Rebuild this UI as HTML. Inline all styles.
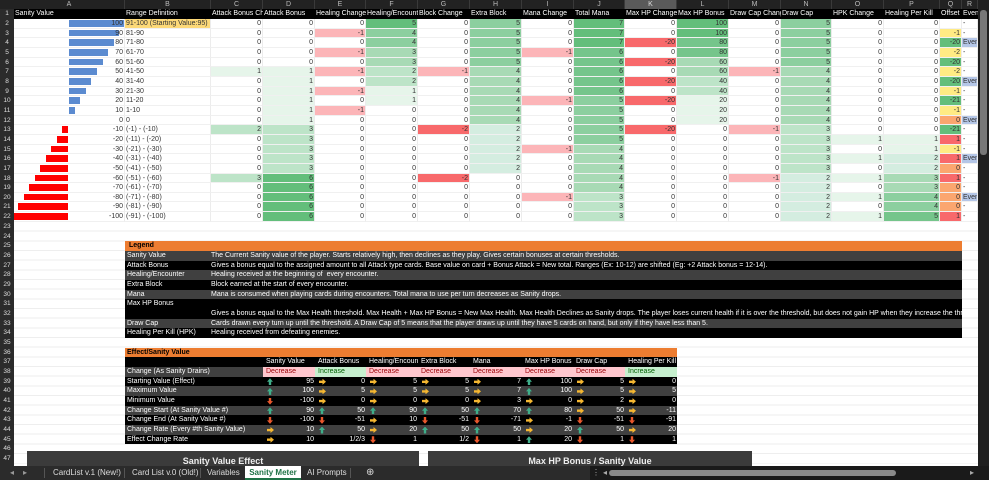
<!DOCTYPE html>
<html><head><meta charset="utf-8"><style>
*{margin:0;padding:0;box-sizing:border-box}
body{width:989px;height:480px;overflow:hidden;background:#fff;font-family:"Liberation Sans",Arial,sans-serif;font-size:7px;position:relative;color:#333}
.g{position:absolute;left:0;top:0;display:grid;grid-template-columns:14px 111px 86px 52px 52px 51px 52px 52px 52px 52px 51px 52px 52px 52px 51px 52px 56px 22px 16px;grid-template-rows:9px 10px repeat(21,9.67px)}
.g>x{display:block;text-align:right;padding:0 1px;line-height:9.67px;white-space:nowrap;overflow:hidden;border-right:1px solid #ececec;border-bottom:1px solid #f0f0f0;position:relative}
.g>x.n{background:#2b2b2b;color:#ddd;text-align:center;border:none;font-size:6.5px}
.g>x.ch{background:#222;color:#bbb;text-align:center;line-height:9px;border:none;border-right:1px solid #3a3a3a}
.g>x.k{background:#5a5a5a;color:#ddd}
.g>x.h{background:#000;color:#fff;text-align:left;line-height:10px;border:none}
.g>x.t{text-align:left}
.a{background:#63be7b}.b{background:#75c58b}.c{background:#8ccf9f}.d{background:#a8dab5}.e{background:#bde4c8}.f{background:#d4ede0}.hh{background:#e6f5ea}
.p{background:#fcb5b8}.r{background:#f8696b}.y{background:#ffeb84}.o{background:#fba66f}.u{background:#b4c6e7;text-align:left!important}.yy{background:#fdd978}
.bp{position:absolute;left:55px;top:1px;bottom:1px;background:#5b8bd0}
.bn{position:absolute;right:56px;top:1px;bottom:1px;background:#ff0000}
.g>x span.v{position:relative}
.lower{position:absolute;left:14px;top:222px;width:964px;height:244px;background-image:repeating-linear-gradient(to bottom,transparent 0,transparent 8.67px,#eee 8.67px,#eee 9.67px)}
.leg{position:absolute;left:125px;top:241.4px;width:837px;color:#fff}
.leg div{height:9.67px;line-height:9.67px;display:flex;white-space:nowrap;overflow:hidden}
.leg div span:first-child{width:86px;flex:0 0 86px;padding-left:2px}
.or{background:#ed7d31!important;color:#000;font-weight:bold;padding-left:2px}
.gr{background:#404040}.bk{background:#000}
.eff{position:absolute;left:125px;top:347.8px;width:552px;color:#fff}
.eff .rw{height:9.67px;line-height:9.67px;display:grid;grid-template-columns:138px 52px 51px 52px 52px 52px 51px 52px 52px;white-space:nowrap}
.eff .rw>span{position:relative;text-align:right;padding-right:1px;overflow:hidden}
.eff .rw>span:first-child{text-align:left;padding-left:2px}
.eff .hd>span{text-align:left!important;padding-left:3px}
.dec{background:#ffc7ce;color:#9c0006;text-align:left!important;padding-left:3px}
.inc{background:#c6efce;color:#006100;text-align:left!important;padding-left:3px}
i{position:absolute;left:4px;top:1.5px;width:6px;height:7px;display:block}
i.u1{background:#3fae8a;clip-path:polygon(50% 0,100% 50%,70% 50%,70% 100%,30% 100%,30% 50%,0 50%)}
i.d1{background:#e9572c;clip-path:polygon(50% 100%,100% 50%,70% 50%,70% 0,30% 0,30% 50%,0 50%)}
i.r1{background:#f5b731;width:7px;height:6px;top:2px;clip-path:polygon(100% 50%,50% 0,50% 30%,0 30%,0 70%,50% 70%,50% 100%)}
.chart{position:absolute;top:451px;height:15px;background:#3b3b3b;color:#eee;font-weight:bold;font-size:9px;text-align:center;line-height:21px;overflow:hidden}
.tabs{position:absolute;left:0;top:466px;width:989px;height:14px;background:#2b2b2b;color:#ddd;font-size:8px}
.tabs span{position:absolute;top:0;line-height:14px;white-space:nowrap}
.vs{position:absolute;left:978px;top:0;width:11px;height:466px;background:#1f1f1f}
</style></head><body>
<div class="lower"></div>
<div class="g">
<x class="n" style="background:#222"></x><x class="ch">A</x><x class="ch">B</x><x class="ch">C</x><x class="ch">D</x><x class="ch">E</x><x class="ch">F</x><x class="ch">G</x><x class="ch">H</x><x class="ch">I</x><x class="ch">J</x><x class="ch k">K</x><x class="ch">L</x><x class="ch">M</x><x class="ch">N</x><x class="ch">O</x><x class="ch">P</x><x class="ch">Q</x><x class="ch">R</x>
<x class="n">1</x><x class="h">Sanity Value</x><x class="h">Range Definition</x><x class="h">Attack Bonus Ch</x><x class="h">Attack Bonus</x><x class="h">Healing Change</x><x class="h">Healing/Encount</x><x class="h">Block Change</x><x class="h">Extra Block</x><x class="h">Mana Change</x><x class="h">Total Mana</x><x class="h">Max HP Change</x><x class="h">Max HP Bonus</x><x class="h">Draw Cap Chang</x><x class="h">Draw Cap</x><x class="h">HPK Change</x><x class="h">Healing Per Kill</x><x class="h">Offset</x><x class="h">Even</x>
<x class="n">2</x><x><b class="bp" style="width:56px"></b><span class="v">100</span></x><x class="t yy">91-100 (Starting Value:95)</x><x>0</x><x>0</x><x>0</x><x class="a">5</x><x>0</x><x class="c">5</x><x>0</x><x class="a">7</x><x>0</x><x class="a">100</x><x>0</x><x class="c">5</x><x>0</x><x>0</x><x></x><x class="t">-</x>
<x class="n">3</x><x><b class="bp" style="width:50px"></b><span class="v">90</span></x><x class="t">81-90</x><x>0</x><x>0</x><x class="p">-1</x><x class="c">4</x><x>0</x><x class="c">5</x><x>0</x><x class="a">7</x><x>0</x><x class="a">100</x><x>0</x><x class="c">5</x><x>0</x><x>0</x><x class="y">-1</x><x class="t">-</x>
<x class="n">4</x><x><b class="bp" style="width:45px"></b><span class="v">80</span></x><x class="t">71-80</x><x>0</x><x>0</x><x>0</x><x class="c">4</x><x>0</x><x class="c">5</x><x>0</x><x class="a">7</x><x class="r">-20</x><x class="b">80</x><x>0</x><x class="c">5</x><x>0</x><x>0</x><x class="a">-20</x><x class="u">Even</x>
<x class="n">5</x><x><b class="bp" style="width:39px"></b><span class="v">70</span></x><x class="t">61-70</x><x>0</x><x>0</x><x class="p">-1</x><x class="d">3</x><x>0</x><x class="c">5</x><x class="p">-1</x><x class="b">6</x><x>0</x><x class="b">80</x><x>0</x><x class="c">5</x><x>0</x><x>0</x><x class="y">-2</x><x class="t">-</x>
<x class="n">6</x><x><b class="bp" style="width:34px"></b><span class="v">60</span></x><x class="t">51-60</x><x>0</x><x>0</x><x>0</x><x class="d">3</x><x>0</x><x class="c">5</x><x>0</x><x class="b">6</x><x class="r">-20</x><x class="d">60</x><x>0</x><x class="c">5</x><x>0</x><x>0</x><x class="a">-20</x><x class="t">-</x>
<x class="n">7</x><x><b class="bp" style="width:28px"></b><span class="v">50</span></x><x class="t">41-50</x><x class="hh">1</x><x class="hh">1</x><x class="p">-1</x><x class="e">2</x><x class="p">-1</x><x class="d">4</x><x>0</x><x class="b">6</x><x>0</x><x class="d">60</x><x class="p">-1</x><x class="d">4</x><x>0</x><x>0</x><x class="y">-2</x><x class="t">-</x>
<x class="n">8</x><x><b class="bp" style="width:22px"></b><span class="v">40</span></x><x class="t">31-40</x><x>0</x><x class="hh">1</x><x>0</x><x class="e">2</x><x>0</x><x class="d">4</x><x>0</x><x class="b">6</x><x class="r">-20</x><x class="e">40</x><x>0</x><x class="d">4</x><x>0</x><x>0</x><x class="a">-20</x><x class="u">Even</x>
<x class="n">9</x><x><b class="bp" style="width:17px"></b><span class="v">30</span></x><x class="t">21-30</x><x>0</x><x class="hh">1</x><x class="p">-1</x><x class="hh">1</x><x>0</x><x class="d">4</x><x>0</x><x class="b">6</x><x>0</x><x class="e">40</x><x>0</x><x class="d">4</x><x>0</x><x>0</x><x class="y">-1</x><x class="t">-</x>
<x class="n">10</x><x><b class="bp" style="width:11px"></b><span class="v">20</span></x><x class="t">11-20</x><x>0</x><x class="hh">1</x><x>0</x><x class="hh">1</x><x>0</x><x class="d">4</x><x class="p">-1</x><x class="c">5</x><x class="r">-20</x><x class="hh">20</x><x>0</x><x class="d">4</x><x>0</x><x>0</x><x class="a">-21</x><x class="t">-</x>
<x class="n">11</x><x><b class="bp" style="width:6px"></b><span class="v">10</span></x><x class="t">1-10</x><x>0</x><x class="hh">1</x><x class="p">-1</x><x>0</x><x>0</x><x class="d">4</x><x>0</x><x class="c">5</x><x>0</x><x class="hh">20</x><x>0</x><x class="d">4</x><x>0</x><x>0</x><x class="y">-1</x><x class="t">-</x>
<x class="n">12</x><x>0</x><x class="t">0</x><x>0</x><x class="hh">1</x><x>0</x><x>0</x><x>0</x><x class="d">4</x><x>0</x><x class="c">5</x><x>0</x><x class="hh">20</x><x>0</x><x class="d">4</x><x>0</x><x>0</x><x class="o">0</x><x class="u">Even</x>
<x class="n">13</x><x><b class="bn" style="width:6px"></b><span class="v">-10</span></x><x class="t">(-1) - (-10)</x><x class="e">2</x><x class="e">3</x><x>0</x><x>0</x><x class="r">-2</x><x class="f">2</x><x>0</x><x class="c">5</x><x class="r">-20</x><x>0</x><x class="p">-1</x><x class="e">3</x><x>0</x><x>0</x><x class="a">-21</x><x class="t">-</x>
<x class="n">14</x><x><b class="bn" style="width:11px"></b><span class="v">-20</span></x><x class="t">(-11) - (-20)</x><x>0</x><x class="e">3</x><x>0</x><x>0</x><x>0</x><x class="f">2</x><x>0</x><x class="c">5</x><x>0</x><x>0</x><x>0</x><x class="e">3</x><x class="hh">1</x><x class="hh">1</x><x class="r">1</x><x class="t">-</x>
<x class="n">15</x><x><b class="bn" style="width:17px"></b><span class="v">-30</span></x><x class="t">(-21) - (-30)</x><x>0</x><x class="e">3</x><x>0</x><x>0</x><x>0</x><x class="f">2</x><x class="p">-1</x><x class="d">4</x><x>0</x><x>0</x><x>0</x><x class="e">3</x><x>0</x><x class="hh">1</x><x class="y">-1</x><x class="t">-</x>
<x class="n">16</x><x><b class="bn" style="width:22px"></b><span class="v">-40</span></x><x class="t">(-31) - (-40)</x><x>0</x><x class="e">3</x><x>0</x><x>0</x><x>0</x><x class="f">2</x><x>0</x><x class="d">4</x><x>0</x><x>0</x><x>0</x><x class="e">3</x><x class="hh">1</x><x class="f">2</x><x class="r">1</x><x class="u">Even</x>
<x class="n">17</x><x><b class="bn" style="width:28px"></b><span class="v">-50</span></x><x class="t">(-41) - (-50)</x><x>0</x><x class="e">3</x><x>0</x><x>0</x><x>0</x><x class="f">2</x><x>0</x><x class="d">4</x><x>0</x><x>0</x><x>0</x><x class="e">3</x><x>0</x><x class="f">2</x><x class="o">0</x><x class="t">-</x>
<x class="n">18</x><x><b class="bn" style="width:33px"></b><span class="v">-60</span></x><x class="t">(-51) - (-60)</x><x class="e">3</x><x class="a">6</x><x>0</x><x>0</x><x class="r">-2</x><x>0</x><x>0</x><x class="d">4</x><x>0</x><x>0</x><x class="p">-1</x><x class="f">2</x><x class="hh">1</x><x class="d">3</x><x class="r">1</x><x class="t">-</x>
<x class="n">19</x><x><b class="bn" style="width:39px"></b><span class="v">-70</span></x><x class="t">(-61) - (-70)</x><x>0</x><x class="a">6</x><x>0</x><x>0</x><x>0</x><x>0</x><x>0</x><x class="d">4</x><x>0</x><x>0</x><x>0</x><x class="f">2</x><x>0</x><x class="d">3</x><x class="o">0</x><x class="t">-</x>
<x class="n">20</x><x><b class="bn" style="width:44px"></b><span class="v">-80</span></x><x class="t">(-71) - (-80)</x><x>0</x><x class="a">6</x><x>0</x><x>0</x><x>0</x><x>0</x><x class="p">-1</x><x class="e">3</x><x>0</x><x>0</x><x>0</x><x class="f">2</x><x class="hh">1</x><x class="c">4</x><x class="o">0</x><x class="u">Even</x>
<x class="n">21</x><x><b class="bn" style="width:50px"></b><span class="v">-90</span></x><x class="t">(-81) - (-90)</x><x>0</x><x class="a">6</x><x>0</x><x>0</x><x>0</x><x>0</x><x>0</x><x class="e">3</x><x>0</x><x>0</x><x>0</x><x class="f">2</x><x>0</x><x class="c">4</x><x class="o">0</x><x class="t">-</x>
<x class="n">22</x><x><b class="bn" style="width:55px"></b><span class="v">-100</span></x><x class="t">(-91) - (-100)</x><x>0</x><x class="a">6</x><x>0</x><x>0</x><x>0</x><x>0</x><x>0</x><x class="e">3</x><x>0</x><x>0</x><x>0</x><x class="f">2</x><x class="hh">1</x><x class="b">5</x><x class="r">1</x><x class="t">-</x>
</div>
<div style="position:absolute;left:0;top:222px;width:14px;height:244px;background:#2b2b2b;color:#ddd;font-size:6.5px;text-align:center;line-height:9.67px">23<br>24<br>25<br>26<br>27<br>28<br>29<br>30<br>31<br>32<br>33<br>34<br>35<br>36<br>37<br>38<br>39<br>40<br>41<br>42<br>43<br>44<br>45<br>46<br>47</div>
<div class="leg">
<div class="or"><span>Legend</span></div>
<div class="gr"><span>Sanity Value</span><span>The Current Sanity value of the player. Starts relatively high, then declines as they play. Gives certain bonuses at certain thresholds.</span></div>
<div class="bk"><span>Attack Bonus</span><span>Gives a bonus equal to the assigned amount to all Attack type cards. Base value on card + Bonus Attack = New total. Ranges (Ex: 10-12) are shifted (Eg: +2 Attack bonus = 12-14).</span></div>
<div class="gr"><span>Healing/Encounter</span><span>Healing received at the beginning of &nbsp;every encounter.</span></div>
<div class="bk"><span>Extra Block</span><span>Block earned at the start of every encounter.</span></div>
<div class="gr"><span>Mana</span><span>Mana is consumed when playing cards during encounters. Total mana to use per turn decreases as Sanity drops.</span></div>
<div class="bk"><span>Max HP Bonus</span><span></span></div>
<div class="bk"><span></span><span>Gives a bonus equal to the Max Health threshold. Max Health + Max HP Bonus = New Max Health. Max Health Declines as Sanity drops. The player loses current health if it is over the threshold, but does not gain HP when they increase the threshold.</span></div>
<div class="gr"><span>Draw Cap</span><span>Cards drawn every turn up until the threshold. A Draw Cap of 5 means that the player draws up until they have 5 cards on hand, but only if they have less than 5.</span></div>
<div class="bk"><span>Healing Per Kill (HPK)</span><span>Healing received from defeating enemies.</span></div>
</div>
<div class="eff">
<div class="rw or" style="display:block">Effect/Sanity Value</div>
<div class="rw hd bk"><span></span><span>Sanity Value</span><span>Attack Bonus</span><span>Healing/Encount</span><span>Extra Block</span><span>Mana</span><span>Max HP Bonus</span><span>Draw Cap</span><span style="text-align:right!important">Healing Per Kill</span></div>
<div class="rw gr"><span>Change (As Sanity Drains)</span><span class="dec">Decrease</span><span class="inc">Increase</span><span class="dec">Decrease</span><span class="dec">Decrease</span><span class="dec">Decrease</span><span class="dec">Decrease</span><span class="dec">Decrease</span><span class="inc">Increase</span></div>
<div class="rw bk"><span>Starting Value (Effect)</span><span><i class="u1"></i>95</span><span><i class="r1"></i>0</span><span><i class="r1"></i>5</span><span><i class="r1"></i>5</span><span><i class="r1"></i>7</span><span><i class="u1"></i>100</span><span><i class="r1"></i>5</span><span><i class="r1"></i>0</span></div>
<div class="rw gr"><span>Maximum Value</span><span><i class="u1"></i>100</span><span><i class="r1"></i>5</span><span><i class="r1"></i>5</span><span><i class="r1"></i>5</span><span><i class="r1"></i>7</span><span><i class="u1"></i>100</span><span><i class="r1"></i>5</span><span><i class="r1"></i>5</span></div>
<div class="rw bk"><span>Minimum Value</span><span><i class="d1"></i>-100</span><span><i class="r1"></i>0</span><span><i class="r1"></i>0</span><span><i class="r1"></i>0</span><span><i class="r1"></i>3</span><span><i class="r1"></i>0</span><span><i class="r1"></i>2</span><span><i class="r1"></i>0</span></div>
<div class="rw gr"><span>Change Start (At Sanity Value #)</span><span><i class="u1"></i>90</span><span><i class="u1"></i>50</span><span><i class="u1"></i>90</span><span><i class="u1"></i>50</span><span><i class="u1"></i>70</span><span><i class="u1"></i>80</span><span><i class="r1"></i>50</span><span><i class="r1"></i>-11</span></div>
<div class="rw bk"><span>Change End (At Sanity Value #)</span><span><i class="d1"></i>-100</span><span><i class="d1"></i>-51</span><span><i class="r1"></i>10</span><span><i class="d1"></i>-51</span><span><i class="d1"></i>-71</span><span><i class="r1"></i>-1</span><span><i class="d1"></i>-51</span><span><i class="d1"></i>-91</span></div>
<div class="rw gr"><span>Change Rate (Every #th Sanity Value)</span><span><i class="r1"></i>10</span><span><i class="u1"></i>50</span><span><i class="r1"></i>20</span><span><i class="u1"></i>50</span><span><i class="u1"></i>50</span><span><i class="r1"></i>20</span><span><i class="u1"></i>50</span><span><i class="r1"></i>20</span></div>
<div class="rw bk"><span>Effect Change Rate</span><span><i class="r1"></i>10</span><span>1/2/3</span><span><i class="d1"></i>1</span><span>1/2</span><span><i class="d1"></i>1</span><span><i class="u1"></i>20</span><span><i class="d1"></i>1</span><span><i class="d1"></i>1</span></div>
</div>
<div class="chart" style="left:27px;width:392px">Sanity Value Effect</div>
<div class="chart" style="left:428px;width:324px">Max HP Bonus / Sanity Value</div>
<div class="vs"><div style="position:absolute;left:2px;top:10px;width:7px;height:145px;background:#777;border-radius:3px"></div></div>
<div class="tabs">
<span style="left:10px;color:#999">◂</span><span style="left:23px;color:#999">▸</span>
<span style="left:44px;top:2px;height:10px;width:1px;background:#555"></span>
<span style="left:53px">CardList v.1 (New!)</span>
<span style="left:124px;top:2px;height:10px;width:1px;background:#555"></span>
<span style="left:132px">Card List v.0 (Old!)</span>
<span style="left:200px;top:2px;height:10px;width:1px;background:#555"></span>
<span style="left:207px">Variables</span>
<span style="left:245px;width:56px;background:#fff;color:#1e7145;font-weight:bold;text-align:center;border-bottom:2px solid #1e7145;height:14px;line-height:13px">Sanity Meter</span>
<span style="left:307px">AI Prompts</span>
<span style="left:350px;top:2px;height:10px;width:1px;background:#555"></span>
<span style="left:366px;font-size:10px;line-height:14px">⊕</span>
<span style="left:590px;width:399px;height:14px;background:#1a1a1a"></span>
<span style="left:592px;color:#aaa">⋮</span>
<span style="left:603px;color:#aaa">◂</span>
<span style="left:609px;top:4px;width:287px;height:6px;background:#8a8a8a;border-radius:3px"></span>
<span style="left:970px;color:#aaa">▸</span>
</div>
</body></html>
